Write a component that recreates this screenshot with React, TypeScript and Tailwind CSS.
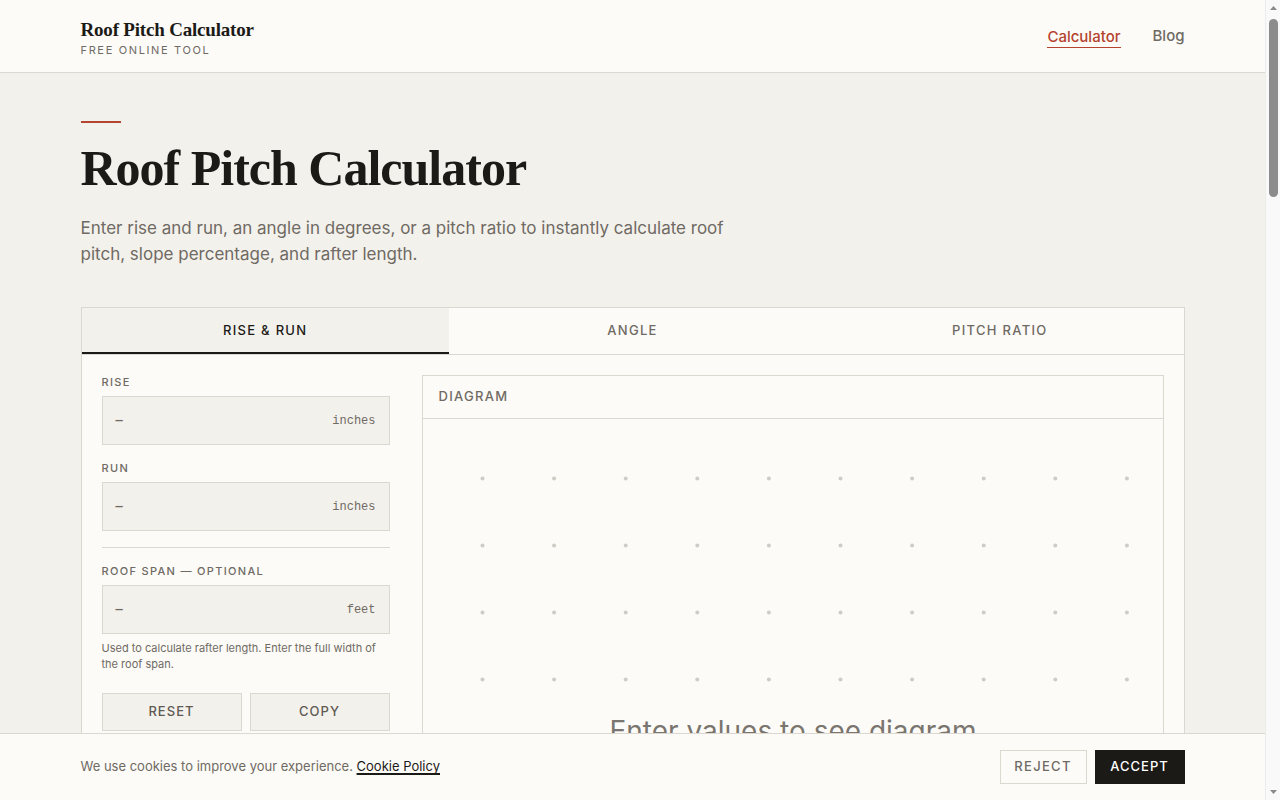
import { useState } from 'react';

const sans = "font-['Inter','Noto_Sans',sans-serif]";
const serif = "font-['Liberation_Serif','DejaVu_Serif',serif]";
const mono = "font-['Liberation_Mono','DejaVu_Sans_Mono',monospace]";

const tabs = ['Rise & Run', 'Angle', 'Pitch Ratio'];

function Field({ label, unit }: { label: string; unit: string }) {
  return (
    <div>
      <div className="text-[11px] leading-[14px] font-medium tracking-[0.12em] uppercase text-[#6f6a63]">{label}</div>
      <div className={`mt-[7px] h-[49px] flex items-center justify-between px-[13px] bg-[#f3f1ec] border border-[#dcd8d0] ${mono} text-[12px]`}>
        <span className="text-[#6f6a63] font-bold">—</span>
        <span className="text-[#6f6a63]">{unit}</span>
      </div>
    </div>
  );
}

function DotGrid() {
  const cols = Array.from({ length: 10 }, (_, i) => 59.5 + i * 71.6);
  const rows = Array.from({ length: 5 }, (_, i) => 59.5 + i * 67);
  return (
    <svg viewBox="0 0 740 420" className="w-full h-[420px] block">
      {rows.map((y) =>
        cols.map((x) => <circle key={`${x}-${y}`} cx={x} cy={y} r="2" fill="#d0ccc5" />)
      )}
      <text
        x="370"
        y="322"
        textAnchor="middle"
        fontSize="28"
        fill="#7a756e"
        fontFamily="Inter, 'Noto Sans', sans-serif"
      >
        Enter values to see diagram
      </text>
    </svg>
  );
}

// classic window scrollbar drawn next to the scrolling page
function ScrollRail() {
  return (
    <div className="w-[15px] shrink-0 bg-[#f9f9f9] border-l border-[#ececec] flex flex-col items-center">
      <svg width="9" height="15" viewBox="0 0 9 15" className="shrink-0">
        <path d="M1 10 L4.5 6 L8 10 Z" fill="#8a8a8a" />
      </svg>
      <div className="mt-[4px] w-[9px] h-[178px] rounded-full bg-[#8c8c8c]" />
      <div className="flex-1" />
      <svg width="9" height="15" viewBox="0 0 9 15" className="shrink-0">
        <path d="M1 5 L4.5 9 L8 5 Z" fill="#8a8a8a" />
      </svg>
    </div>
  );
}

export default function App() {
  const [tab, setTab] = useState(0);

  return (
    <div className={`h-screen flex bg-[#f3f1ec] text-[#1c1a17] ${sans}`}>
      <div className="flex-1 min-w-0 overflow-y-auto [scrollbar-width:none]">
        {/* Top bar */}
        <header className="h-[73px] bg-[#fcfbf8] border-b border-[#dcd8d0]">
          <div className="max-w-[1104px] mx-auto h-full flex items-center justify-between">
            <div className="pt-[3px]">
              <div className={`${serif} font-bold text-[19px] leading-[22px] tracking-[-0.01em]`}>Roof Pitch Calculator</div>
              <div className="text-[11px] leading-[14px] tracking-[0.15em] text-[#6f6a63] mt-[2px]">FREE ONLINE TOOL</div>
            </div>
            <nav className="flex items-center gap-8 text-[15px]">
              <a className="text-[#b4432f] font-medium border-b border-[#b4432f] leading-[21px] mt-[1px]">Calculator</a>
              <a className="text-[#6f6a63] font-medium">Blog</a>
            </nav>
          </div>
        </header>

        <main className="max-w-[1104px] mx-auto pt-12 pb-24">
          <div className="w-10 h-[2px] bg-[#b4432f]" />
          <h1 className={`${serif} font-bold text-[50px] leading-[56px] tracking-[-0.02em] mt-[17px]`}>
            Roof Pitch Calculator
          </h1>
          <p className="mt-[19px] max-w-[670px] text-[17px] leading-[26px] text-[#6f6a63]">
            Enter rise and run, an angle in degrees, or a pitch ratio to instantly calculate roof pitch, slope
            percentage, and rafter length.
          </p>

          {/* Calculator card */}
          <section className="mt-[40px] bg-[#fcfbf8] border border-[#dcd8d0]">
            <div className="grid grid-cols-3 border-b border-[#dcd8d0]">
              {tabs.map((t, i) => (
                <button
                  key={t}
                  onClick={() => setTab(i)}
                  className={`h-[46px] text-[13px] font-medium tracking-[0.1em] uppercase ${
                    tab === i
                      ? 'bg-[#f3f1ec] text-[#1c1a17] shadow-[inset_0_-2px_0_#1c1a17]'
                      : 'text-[#6f6a63]'
                  }`}
                >
                  {t}
                </button>
              ))}
            </div>

            <div className="p-5 flex gap-8">
              <div className="w-[288px] shrink-0">
                <Field label="Rise" unit="inches" />
                <div className="mt-4">
                  <Field label="Run" unit="inches" />
                </div>
                <div className="mt-4 border-t border-[#dcd8d0]" />
                <div className="mt-4">
                  <Field label="Roof span — optional" unit="feet" />
                </div>
                <p className="mt-[6px] text-[11px] leading-[16px] text-[#6f6a63]">
                  Used to calculate rafter length. Enter the full width of the roof span.
                </p>
                <div className="mt-[21px] grid grid-cols-2 gap-2">
                  <button className="h-[38px] bg-[#f3f1ec] border border-[#dcd8d0] text-[13px] font-medium tracking-[0.08em] text-[#5f5a53]">
                    RESET
                  </button>
                  <button className="h-[38px] bg-[#f3f1ec] border border-[#dcd8d0] text-[13px] font-medium tracking-[0.08em] text-[#5f5a53]">
                    COPY
                  </button>
                </div>
              </div>

              <div className="flex-1 border border-[#dcd8d0] self-start">
                <div className="h-[43px] px-4 flex items-center border-b border-[#dcd8d0] text-[13px] font-medium tracking-[0.1em] text-[#6f6a63]">
                  DIAGRAM
                </div>
                <DotGrid />
              </div>
            </div>
          </section>
        </main>
      </div>

      <ScrollRail />

      {/* Cookie consent */}
      <div className="fixed bottom-0 left-0 right-[15px] h-[67px] bg-[#fcfbf8] border-t border-[#dcd8d0]">
        <div className="max-w-[1104px] mx-auto h-full flex items-center justify-between">
          <p className="text-[13px] text-[#6f6a63]">
            We use cookies to improve your experience.{' '}
            <a className="text-[#1c1a17] underline decoration-[1.5px] underline-offset-2">Cookie Policy</a>
          </p>
          <div className="flex gap-2">
            <button className="h-[34px] w-[87px] border border-[#dcd8d0] text-[13px] font-medium tracking-[0.1em] text-[#6f6a63]">
              REJECT
            </button>
            <button className="h-[34px] w-[90px] bg-[#1c1a17] text-[13px] font-medium tracking-[0.08em] text-white">
              ACCEPT
            </button>
          </div>
        </div>
      </div>
    </div>
  );
}
